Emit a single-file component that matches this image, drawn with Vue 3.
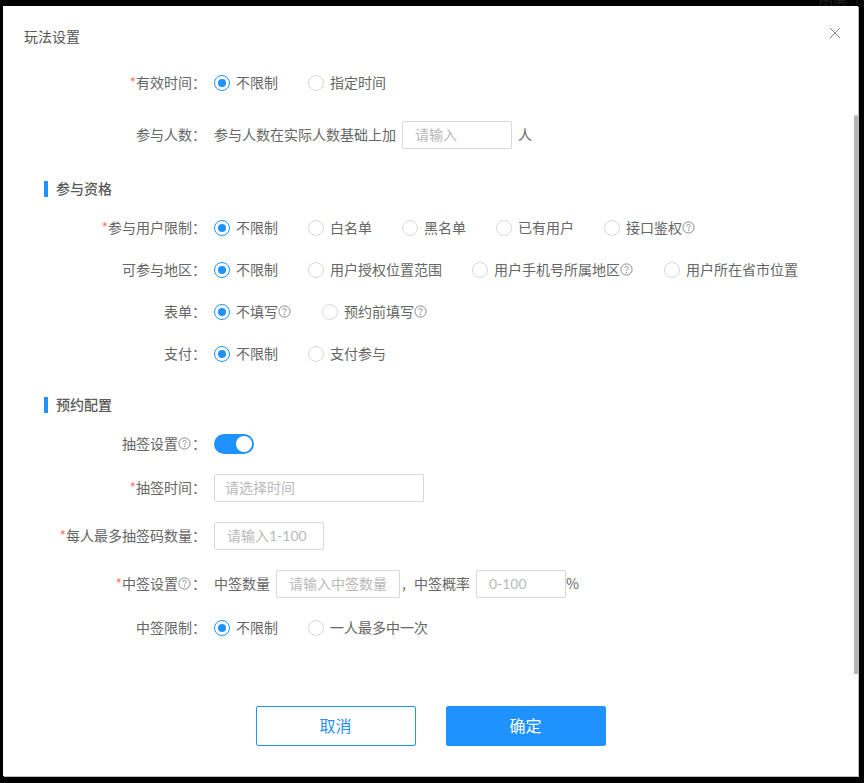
<script setup>
const eligibility = [
  { label: '参与用户限制', required: true, options: [{ t: '不限制' }, { t: '白名单' }, { t: '黑名单' }, { t: '已有用户' }, { t: '接口鉴权', help: true }] },
  { label: '可参与地区', options: [{ t: '不限制' }, { t: '用户授权位置范围' }, { t: '用户手机号所属地区', help: true }, { t: '用户所在省市位置' }] },
  { label: '表单', options: [{ t: '不填写', help: true }, { t: '预约前填写', help: true }] },
  { label: '支付', options: [{ t: '不限制' }, { t: '支付参与' }] }
]
</script>

<template>
  <div class="page">
    <div class="ghost">图层 ⓘ</div>
    <div class="modal">
      <header class="head">
        <span class="title">玩法设置</span>
        <svg class="close" width="12" height="12" viewBox="0 0 12 12"><path d="M1 1l10 10M11 1L1 11" stroke="#8c8c8c" stroke-width="1" fill="none" /></svg>
      </header>

      <div class="scrollbar"></div>

      <div class="form">
        <div class="row first">
          <label class="label"><i>*</i>有效时间：</label>
          <div class="radios">
            <span class="radio on"><b></b><span class="rt">不限制</span></span>
            <span class="radio"><b></b><span class="rt">指定时间</span></span>
          </div>
        </div>
        <div class="row gap24">
          <label class="label">参与人数：</label>
          <span class="txt">参与人数在实际人数基础上加</span>
          <span class="input w110 ml6">请输入</span>
          <span class="txt ml6">人</span>
        </div>

        <h3 class="section s1">参与资格</h3>
        <div v-for="(r, i) in eligibility" :key="r.label" class="row" :class="i === 0 ? 'gap17' : 'gap14'">
          <label class="label"><i v-if="r.required">*</i>{{ r.label }}：</label>
          <div class="radios">
            <span v-for="(o, j) in r.options" :key="o.t" class="radio" :class="{ on: j === 0 }">
              <b></b><span class="rt">{{ o.t }}</span>
              <svg v-if="o.help" class="help" width="13" height="13" viewBox="0 0 13 13"><circle cx="6.5" cy="6.5" r="5.6" fill="none" stroke="#7d7d7d" stroke-width=".9" /><path d="M4.8 5.1c0-1.1.8-1.6 1.7-1.6s1.7.6 1.7 1.5c0 1.3-1.7 1.3-1.7 2.7" fill="none" stroke="#7d7d7d" stroke-width=".9" /><circle cx="6.5" cy="9.4" r=".6" fill="#7d7d7d" /></svg>
            </span>
          </div>
        </div>

        <h3 class="section s2">预约配置</h3>
        <div class="row gap17">
          <label class="label">抽签设置<svg class="help" width="13" height="13" viewBox="0 0 13 13"><circle cx="6.5" cy="6.5" r="5.6" fill="none" stroke="#7d7d7d" stroke-width=".9" /><path d="M4.8 5.1c0-1.1.8-1.6 1.7-1.6s1.7.6 1.7 1.5c0 1.3-1.7 1.3-1.7 2.7" fill="none" stroke="#7d7d7d" stroke-width=".9" /><circle cx="6.5" cy="9.4" r=".6" fill="#7d7d7d" /></svg>：</label>
          <span class="switch"><em></em></span>
        </div>
        <div class="row gap16">
          <label class="label"><i>*</i>抽签时间：</label>
          <span class="input w210 p11">请选择时间</span>
        </div>
        <div class="row gap20">
          <label class="label"><i>*</i>每人最多抽签码数量：</label>
          <span class="input w110">请输入1-100</span>
        </div>
        <div class="row gap20">
          <label class="label"><i>*</i>中签设置<svg class="help" width="13" height="13" viewBox="0 0 13 13"><circle cx="6.5" cy="6.5" r="5.6" fill="none" stroke="#7d7d7d" stroke-width=".9" /><path d="M4.8 5.1c0-1.1.8-1.6 1.7-1.6s1.7.6 1.7 1.5c0 1.3-1.7 1.3-1.7 2.7" fill="none" stroke="#7d7d7d" stroke-width=".9" /><circle cx="6.5" cy="9.4" r=".6" fill="#7d7d7d" /></svg>：</label>
          <span class="txt">中签数量</span>
          <span class="input w124 ml6">请输入中签数量</span>
          <span class="txt comma">,</span>
          <span class="txt">中签概率</span>
          <span class="input w90 ml6">0-100</span>
          <span class="txt">%</span>
        </div>
        <div class="row gap16">
          <label class="label">中签限制：</label>
          <div class="radios">
            <span class="radio on"><b></b><span class="rt">不限制</span></span>
            <span class="radio"><b></b><span class="rt">一人最多中一次</span></span>
          </div>
        </div>
      </div>

      <footer class="foot">
        <button class="btn ghost-btn">取消</button>
        <button class="btn primary">确定</button>
      </footer>
    </div>
  </div>
</template>

<style>
html, body { margin: 0; background: #000; }
</style>

<style scoped>
.page {
  position: relative;
  width: 864px;
  height: 783px;
  box-sizing: border-box;
  padding: 6px 6px 7px 3px;
  background: #000;
  overflow: hidden;
  font-family: "Noto Sans CJK SC", "Liberation Sans", sans-serif;
  font-size: 14px;
  color: #666;
}
.ghost {
  position: absolute;
  top: -10px;
  right: 0;
  font-size: 14px;
  line-height: 20px;
  color: #222;
}
.modal {
  position: relative;
  height: 100%;
  background: #fff;
  display: flex;
  flex-direction: column;
  box-shadow: 1px 1px 0 #bdbdbd;
}
.head {
  height: 63px;
  flex: none;
  box-sizing: border-box;
  padding: 20px 17px 0 21px;
  display: flex;
  justify-content: space-between;
}
.title { line-height: 20px; color: #555; }
.close { margin-top: 1px; }
.scrollbar {
  position: absolute;
  right: 0;
  top: 109px;
  width: 4px;
  height: 559px;
  background: #b5b5b5;
  border-radius: 2px 2px 0 0;
}
.form { flex: 1; }
.row { display: flex; align-items: center; height: 28px; white-space: nowrap; }
.first { margin-top: 0; }
.gap14 { margin-top: 14px; }
.gap16 { margin-top: 16px; }
.gap17 { margin-top: 17px; }
.gap20 { margin-top: 20px; }
.gap24 { margin-top: 24px; }
.label {
  flex: none;
  width: 203px;
  margin: -2px 8px 0 0;
  text-align: right;
  line-height: 20px;
}
.label i { font-style: normal; color: #ff7a6b; }
.label .help { margin: 0 1px 0 0; vertical-align: -1px; }
.txt { line-height: 20px; margin-top: -2px; }
.rt { margin-top: -2px; }
.ml6 { margin-left: 6px; }
.comma { margin: -2px 8px 0 2px; }
.radios { display: flex; gap: 30px; margin-top: -1px; }
.radio { display: inline-flex; align-items: center; line-height: 20px; }
.radio b {
  width: 16px;
  height: 16px;
  box-sizing: border-box;
  border: 1px solid #d9d9d9;
  border-radius: 50%;
  margin-right: 6px;
  position: relative;
}
.radio.on b { border-color: #1f92ff; }
.radio.on b::after {
  content: "";
  position: absolute;
  left: 3px;
  top: 3px;
  width: 8px;
  height: 8px;
  border-radius: 50%;
  background: #1f92ff;
}
.help { margin-right: 1px; flex: none; }
.input {
  box-sizing: border-box;
  height: 28px;
  line-height: 26px;
  border: 1px solid #d9d9d9;
  border-radius: 2px;
  padding-left: 12px;
  color: #b8b8b8;
  background: #fff;
  font-family: Lato, "Noto Sans CJK SC", sans-serif;
}
.p11 { padding-left: 10px; }
.w90 { width: 90px; }
.w110 { width: 110px; }
.w124 { width: 124px; }
.w210 { width: 210px; }
.section {
  margin: 0;
  height: 16px;
  line-height: 14px;
  padding-left: 8px;
  margin-left: 41px;
  border-left: 4px solid #1f92ff;
  font-size: 14px;
  font-weight: 500;
  color: #595959;
}
.s1 { margin-top: 32px; }
.s2 { margin-top: 29px; }
.switch {
  position: relative;
  width: 40px;
  height: 20px;
  border-radius: 10px;
  background: #1f92ff;
}
.switch em {
  position: absolute;
  left: 22px;
  top: 2px;
  width: 16px;
  height: 16px;
  border-radius: 50%;
  background: #fff;
}
.foot {
  flex: none;
  display: flex;
  justify-content: center;
  gap: 30px;
  padding: 0 0 30px 0;
}
.btn {
  width: 160px;
  height: 40px;
  box-sizing: border-box;
  border-radius: 2px;
  font-family: inherit;
  font-size: 16px;
  padding: 0 0 2px;
}
.ghost-btn { background: #fff; border: 1px solid #1f92ff; color: #1f92ff; }
.primary { background: #1f92ff; border: 1px solid #1f92ff; color: #fff; }
</style>
